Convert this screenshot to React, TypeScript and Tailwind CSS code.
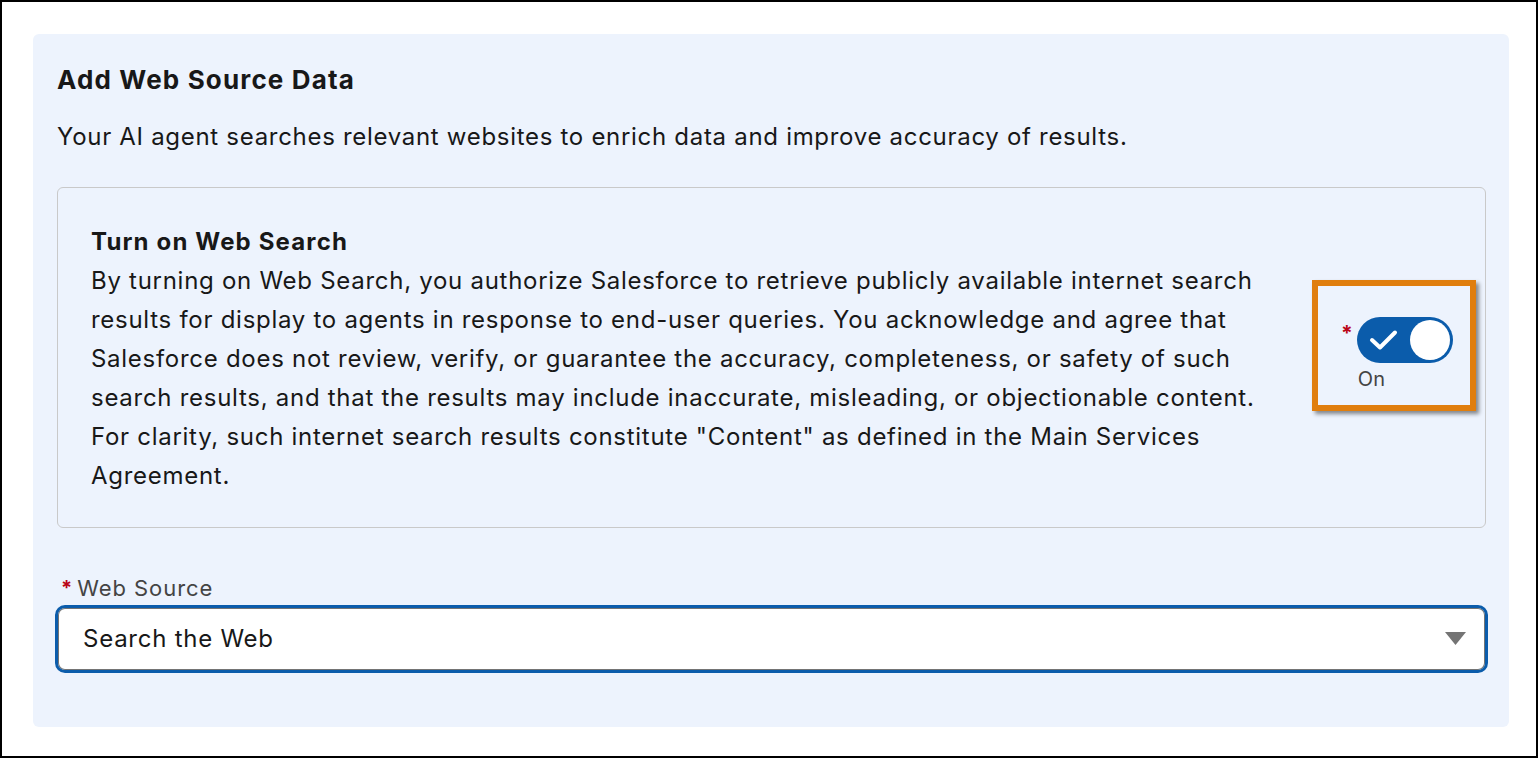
const font = { fontFamily: 'Inter, "Noto Sans", sans-serif' }

const bodyLines = [
  'By turning on Web Search, you authorize Salesforce to retrieve publicly available internet search',
  'results for display to agents in response to end-user queries. You acknowledge and agree that',
  'Salesforce does not review, verify, or guarantee the accuracy, completeness, or safety of such',
  'search results, and that the results may include inaccurate, misleading, or objectionable content.',
  'For clarity, such internet search results constitute "Content" as defined in the Main Services',
  'Agreement.',
]

export default function App() {
  return (
    <div
      className="w-[1538px] h-[758px] border-2 border-black bg-white pt-[32px] pl-[31px]"
      style={font}
    >
      <div className="w-[1476px] h-[693px] rounded-[6px] bg-[#edf3fd] pl-[24px] pt-[28px]">
        <h2 className="text-[26px] leading-[36px] font-bold tracking-[1.15px] text-[#181818]">Add Web Source Data</h2>
        <p className="mt-[23px] text-[24px] leading-[32px] tracking-[0.7px] text-[#181818]">
          Your AI agent searches relevant websites to enrich data and improve accuracy of results.
        </p>

        {/* Web search consent box */}
        <div className="mt-[34px] w-[1429px] h-[341px] rounded-[6px] border border-[#c9c9c9] pl-[33px] pt-[34px] flex">
          <div className="w-[1190px] text-[24px] leading-[39px] tracking-[0.72px] text-[#181818]">
            <div className="font-bold tracking-[1.15px]">Turn on Web Search</div>
            <p>
              {bodyLines.map((line) => (
                <span key={line} className="block whitespace-nowrap">
                  {line}
                </span>
              ))}
            </p>
          </div>

          <div className="ml-[31px] mt-[58px] w-[164px] h-[131px] border-[6px] border-[#e07e0e] shadow-[3px_3px_4px_rgba(0,0,0,0.45)] pl-[23px] pt-[31px] flex items-start">
            <span className="text-[#ba0517] text-[21px] font-bold leading-[20px] mt-[7px] mr-[4px]">*</span>
            <div className="flex flex-col">
              <div className="w-[96px] h-[46px] rounded-full bg-[#0b5cab] flex items-center justify-between pl-[12px] pr-[3px]">
                <svg width="30" height="24" viewBox="0 0 30 24">
                  <path
                    d="M3 12 L11 19.5 L26 4.5"
                    fill="none"
                    stroke="white"
                    strokeWidth="4"
                    strokeLinecap="round"
                    strokeLinejoin="round"
                  />
                </svg>
                <div className="w-[40px] h-[40px] rounded-full bg-white" />
              </div>
              <div className="mt-[4px] ml-[1px] text-[20px] leading-[24px] tracking-[0.3px] text-[#444]">On</div>
            </div>
          </div>
        </div>

        {/* Web source select */}
        <div className="mt-[46px] flex items-center text-[22px] leading-[28px] tracking-[0.95px] text-[#444]">
          <span className="text-[#ba0517] text-[20px] font-bold mr-[4px] ml-[4px]">*</span>
          Web Source
        </div>
        <div className="mt-[3px] -ml-[2px] w-[1433px] h-[68px] rounded-[10px] border-[3px] border-[#0b5cab] bg-white flex items-center justify-between pl-[25px] pr-[19px] shadow-[inset_0_0_0_1px_#747474]">
          <span className="text-[24px] tracking-[0.75px] text-[#181818]">Search the Web</span>
          <svg width="21" height="14" viewBox="0 0 21 14">
            <path d="M0 0 H21 L10.5 13 Z" fill="#747474" />
          </svg>
        </div>
      </div>
    </div>
  )
}
